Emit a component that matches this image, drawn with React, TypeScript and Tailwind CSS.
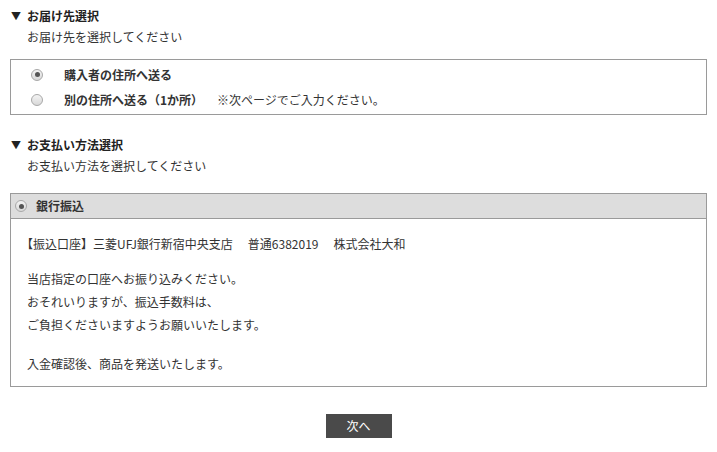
import React from "react";

function Radio({ checked }: { checked?: boolean }) {
  return (
    <span className="flex h-[12px] w-[12px] shrink-0 items-center justify-center rounded-full border border-[#a8a8a8] bg-gradient-to-b from-[#f4f4f4] to-[#d8d8d8]">
      {checked && <span className="h-[5px] w-[5px] rounded-full bg-[#555]" />}
    </span>
  );
}

export default function App() {
  return (
    <div
      className="min-h-[452px] bg-white px-[10px] pt-[8px] text-[12px] text-[#333]"
      style={{ fontFamily: '"Noto Sans CJK JP", "Noto Sans", sans-serif' }}
    >
      <h2 className="flex items-center pl-[1px] font-bold leading-[16px] text-[#222]">
        <span className="mr-[6px] text-[10px]">▼</span>お届け先選択
      </h2>
      <p className="mt-[5px] pl-[17px] leading-[16px]">お届け先を選択してください</p>

      <div className="mt-[14px] border border-[#9a9a9a] pb-[2px] pt-[2px]">
        <div className="flex h-[25px] items-center pl-[20px]">
          <Radio checked />
          <span className="ml-[21px] font-bold">購入者の住所へ送る</span>
        </div>
        <div className="flex h-[25px] items-center pl-[20px]">
          <Radio />
          <span className="ml-[21px] font-bold">別の住所へ送る（1か所）</span>
          <span className="ml-[14px]">※次ページでご入力ください。</span>
        </div>
      </div>

      <h2 className="mt-[22px] flex items-center pl-[1px] font-bold leading-[16px] text-[#222]">
        <span className="mr-[6px] text-[10px]">▼</span>お支払い方法選択
      </h2>
      <p className="mt-[5px] pl-[17px] leading-[16px]">お支払い方法を選択してください</p>

      <div className="mt-[19px] border border-[#9a9a9a]">
        <div className="flex h-[25px] items-center border-b border-[#9a9a9a] bg-[#dddddd] pl-[4px]">
          <Radio checked />
          <span className="ml-[9px] font-bold">銀行振込</span>
        </div>
        <div className="pb-[11px] pl-[10px] pr-[16px] pt-[13px] leading-[23px]">
          <p>
            【振込口座】三菱UFJ銀行新宿中央支店<span className="inline-block w-[15px]" />普通6382019
            <span className="inline-block w-[15px]" />株式会社大和
          </p>
          <div className="pl-[6px]">
            <p className="mt-[12px]">
              当店指定の口座へお振り込みください。
              <br />
              おそれいりますが、振込手数料は、
              <br />
              ご負担くださいますようお願いいたします。
            </p>
            <p className="mt-[16px]">入金確認後、商品を発送いたします。</p>
          </div>
        </div>
      </div>

      <div className="mt-[27px] flex justify-center">
        <button className="h-[24px] w-[66px] bg-[#4a4a4a] text-[12px] text-white">次へ</button>
      </div>
    </div>
  );
}
